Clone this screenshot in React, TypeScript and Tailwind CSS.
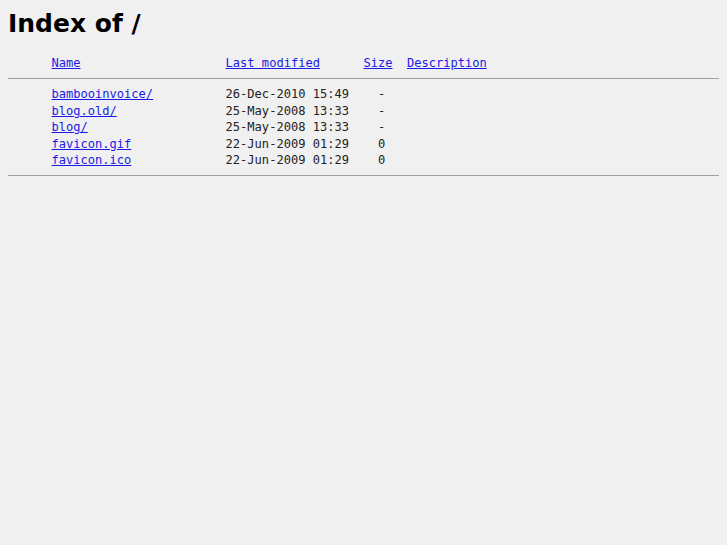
import React from "react";

const rows = [
  { name: "bambooinvoice/", date: "26-Dec-2010 15:49", size: "-" },
  { name: "blog.old/", date: "25-May-2008 13:33", size: "-" },
  { name: "blog/", date: "25-May-2008 13:33", size: "-" },
  { name: "favicon.gif", date: "22-Jun-2009 01:29", size: "0" },
  { name: "favicon.ico", date: "22-Jun-2009 01:29", size: "0" },
];

export default function App() {
  return (
    <div className="min-h-[545px] bg-[#f0f0f0] p-2 text-[#222]">
      <h1 className="font-['DejaVu_Sans',sans-serif] text-[25px] font-bold leading-[29px] text-black mt-[1px]">
        Index of /
      </h1>
      <pre className="mt-[17px] font-['DejaVu_Sans_Mono',monospace] text-[12.05px] leading-[16.4px] whitespace-pre">
        {"      "}
        <a href="#" className="text-[#1a1ae6] underline">Name</a>
        {"                    "}
        <a href="#" className="text-[#1a1ae6] underline">Last modified</a>
        {"      "}
        <a href="#" className="text-[#1a1ae6] underline">Size</a>
        {"  "}
        <a href="#" className="text-[#1a1ae6] underline">Description</a>
        <hr className="mt-[7px] mb-[7px] border-0 border-t border-[#a0a0a0]" />
        {rows.map((r) => (
          <div key={r.name}>
            {"      "}
            <a href="#" className="text-[#1a1ae6] underline">{r.name}</a>
            {" ".repeat(24 - r.name.length)}
            {r.date}
            {"    "}
            {r.size}
          </div>
        ))}
        <hr className="mt-[7px] border-0 border-t border-[#a0a0a0]" />
      </pre>
    </div>
  );
}
